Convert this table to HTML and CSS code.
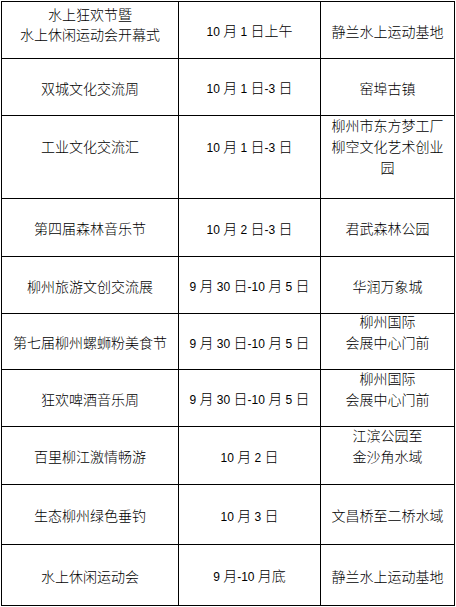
FILE: index.html
```html
<!DOCTYPE html>
<html lang="zh-CN">
<head>
<meta charset="utf-8">
<title>活动安排</title>
<link rel="stylesheet" href="styles.css">
</head>
<body>
<div class="table">
  <div class="cell r1 multi2a"><div class="txt">水上狂欢节暨<br>水上休闲运动会开幕式</div></div>
  <div class="cell r1"><div class="txt"><span class="n">10 </span>月<span class="n"> 1 </span>日上午</div></div>
  <div class="cell r1"><div class="txt">静兰水上运动基地</div></div>

  <div class="cell"><div class="txt">双城文化交流周</div></div>
  <div class="cell"><div class="txt"><span class="n">10 </span>月<span class="n"> 1 </span>日<span class="n">-3 </span>日</div></div>
  <div class="cell"><div class="txt">窑埠古镇</div></div>

  <div class="cell r3"><div class="txt">工业文化交流汇</div></div>
  <div class="cell r3"><div class="txt"><span class="n">10 </span>月<span class="n"> 1 </span>日<span class="n">-3 </span>日</div></div>
  <div class="cell r3"><div class="txt">柳州市东方梦工厂<br>柳空文化艺术创业<br>园</div></div>

  <div class="cell"><div class="txt">第四届森林音乐节</div></div>
  <div class="cell"><div class="txt"><span class="n">10 </span>月<span class="n"> 2 </span>日<span class="n">-3 </span>日</div></div>
  <div class="cell"><div class="txt">君武森林公园</div></div>

  <div class="cell"><div class="txt">柳州旅游文创交流展</div></div>
  <div class="cell"><div class="txt"><span class="n">9 </span>月<span class="n"> 30 </span>日<span class="n">-10 </span>月<span class="n"> 5 </span>日</div></div>
  <div class="cell"><div class="txt">华润万象城</div></div>

  <div class="cell"><div class="txt">第七届柳州螺蛳粉美食节</div></div>
  <div class="cell"><div class="txt"><span class="n">9 </span>月<span class="n"> 30 </span>日<span class="n">-10 </span>月<span class="n"> 5 </span>日</div></div>
  <div class="cell multi2"><div class="txt">柳州国际<br>会展中心门前</div></div>

  <div class="cell"><div class="txt">狂欢啤酒音乐周</div></div>
  <div class="cell"><div class="txt"><span class="n">9 </span>月<span class="n"> 30 </span>日<span class="n">-10 </span>月<span class="n"> 5 </span>日</div></div>
  <div class="cell multi2"><div class="txt">柳州国际<br>会展中心门前</div></div>

  <div class="cell"><div class="txt">百里柳江激情畅游</div></div>
  <div class="cell"><div class="txt"><span class="n">10 </span>月<span class="n"> 2 </span>日</div></div>
  <div class="cell multi2"><div class="txt">江滨公园至<br>金沙角水域</div></div>

  <div class="cell"><div class="txt">生态柳州绿色垂钓</div></div>
  <div class="cell"><div class="txt"><span class="n">10 </span>月<span class="n"> 3 </span>日</div></div>
  <div class="cell"><div class="txt">文昌桥至二桥水域</div></div>

  <div class="cell"><div class="txt">水上休闲运动会</div></div>
  <div class="cell"><div class="txt"><span class="n">9 </span>月<span class="n">-10 </span>月底</div></div>
  <div class="cell"><div class="txt">静兰水上运动基地</div></div>
</div>
</body>
</html>
```

FILE: styles.css
```css
html, body {
  margin: 0;
  padding: 0;
  background: #fff;
}

body {
  font-family: "Liberation Sans", "Noto Sans CJK SC", sans-serif;
  font-size: 14px;
  font-weight: 300;
  line-height: 21px;
  color: #000;
}

.table {
  display: grid;
  grid-template-columns: 177px 142px 134px;
  grid-template-rows: 57px 57px 83px 58px 57px 56px 57px 58px 60px 61px;
  width: max-content;
  margin: 1px 0 0 1px;
  border-left: 1px solid #000;
  border-top: 1px solid #000;
}

.cell {
  box-sizing: border-box;
  display: flex;
  flex-direction: column;
  justify-content: center;
  text-align: center;
  border-right: 1px solid #000;
  border-bottom: 1px solid #000;
  padding-top: 4px;
  overflow: hidden;
}

.txt {
  white-space: nowrap;
}

.n {
  font-size: 12px;
  font-weight: 400;
}

.cell.multi2 {
  padding-top: 0;
  padding-bottom: 17px;
}

.cell.multi2a {
  padding-top: 0;
  padding-bottom: 11px;
  line-height: 20px;
}

.cell.r3 {
  padding-top: 0;
  padding-bottom: 19px;
}
```
